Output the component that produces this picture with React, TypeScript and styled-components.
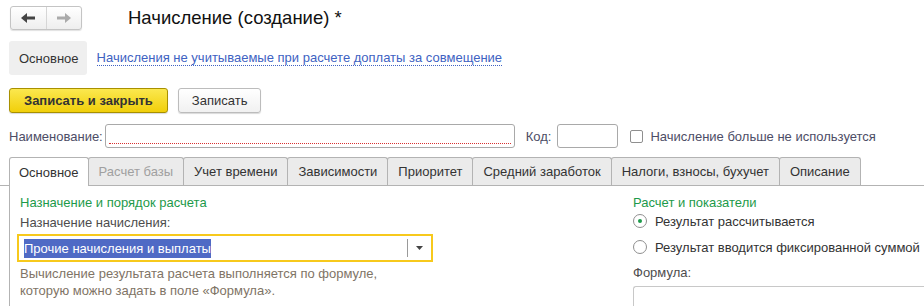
import React from 'react'
import styled, {createGlobalStyle} from 'styled-components'

const GlobalStyle = createGlobalStyle`
	html, body {
		margin: 0;
		padding: 0;
		background: #fff;
		font-family: Arial, "Liberation Sans", sans-serif;
		font-size: 13px;
		color: #333;
		overflow: hidden;
	}
`

const Page = styled.div`
	width: 924px;
	height: 306px;
	overflow: hidden;
`

const Header = styled.div`
	display: flex;
	align-items: center;
	padding: 6px 0 0 10px;
	height: 24px;
`

const NavGroup = styled.div`
	display: flex;
	width: 72px;
	height: 24px;
	box-sizing: border-box;
	border: 1px solid #c4c4c4;
	border-radius: 3px;
	background: linear-gradient(#ffffff, #eeeeee);
	box-shadow: 0 1px 1px rgba(0, 0, 0, 0.12);
`

const NavButton = styled.div<{divider?: boolean}>`
	flex: 1;
	display: flex;
	align-items: center;
	justify-content: center;
	border-left: ${props => props.divider ? '1px solid #d6d6d6' : 'none'};
`

const Title = styled.h1`
	margin: 0 0 0 46px;
	font-size: 18.5px;
	font-weight: normal;
	color: #111;
	line-height: 24px;
`

const SectionRow = styled.div`
	display: flex;
	align-items: center;
	margin: 11px 0 0 9px;
	height: 34px;
`

const SectionCurrent = styled.div`
	display: flex;
	align-items: center;
	height: 34px;
	padding: 0 8px 0 10px;
	background: #efefef;
	border-radius: 3px;
	color: #333;
`

const SectionLink = styled.a`
	margin-left: 10px;
	color: #4062c2;
	text-decoration: none;
	border-bottom: 1px dotted #4062c2;
	line-height: 14px;
`

const Toolbar = styled.div`
	display: flex;
	gap: 10px;
	margin: 13px 0 0 9px;
	height: 25px;
`

const Button = styled.button<{primary?: boolean}>`
	height: 25px;
	box-sizing: border-box;
	padding: 0 ${props => props.primary ? '14px' : '13px'};
	font-family: Arial, "Liberation Sans", sans-serif;
	font-size: 13px;
	font-weight: ${props => props.primary ? 'bold' : 'normal'};
	color: #333;
	border-radius: 3px;
	border: 1px solid ${props => props.primary ? '#a89000' : '#bcbcbc'};
	background: ${props => props.primary
		? 'linear-gradient(#fbe84f, #f1cf0a)'
		: 'linear-gradient(#ffffff, #f1f1f1)'};
	box-shadow: 0 1px 1px rgba(0, 0, 0, 0.15);
`

const FieldRow = styled.div`
	display: flex;
	align-items: center;
	margin: 11px 0 0 9px;
	height: 24px;
`

const Label = styled.span<{gap?: number, lead?: number}>`
	color: #4d4d66;
	margin-left: ${props => props.lead ?? 0}px;
	margin-right: ${props => props.gap ?? 0}px;
	white-space: nowrap;
`

const Input = styled.div<{width: number, required?: boolean}>`
	position: relative;
	width: ${props => props.width}px;
	height: 24px;
	box-sizing: border-box;
	border: 1px solid #a9a9a9;
	border-radius: 3px;
	background: #fff;

	&::after {
		content: '';
		display: ${props => props.required ? 'block' : 'none'};
		position: absolute;
		left: 3px;
		right: 3px;
		bottom: 3px;
		border-bottom: 1px dotted #d83030;
	}
`

const CheckBox = styled.span`
	display: inline-block;
	width: 13px;
	height: 13px;
	box-sizing: border-box;
	border: 1px solid #8f8f8f;
	border-radius: 2px;
	margin: 0 7px 0 12px;
	background: #fff;
`

const Tabs = styled.div`
	display: flex;
	margin-top: 9px;
	padding-left: 9px;
	height: 28px;
	border-bottom: 1px solid #b3b3b3;
`

const Tab = styled.div<{active?: boolean, disabled?: boolean}>`
	display: flex;
	align-items: center;
	box-sizing: border-box;
	height: ${props => props.active ? '29px' : '28px'};
	padding: 0 ${props => props.active ? '9px' : '10px'};
	margin-left: -1px;
	border: 1px solid #b3b3b3;
	border-bottom: none;
	border-radius: 3px 3px 0 0;
	background: ${props => props.active ? '#fff' : '#ebebeb'};
	color: ${props => props.disabled ? '#a0a0a0' : '#333'};
	position: relative;
	z-index: ${props => props.active ? 1 : 0};
	white-space: nowrap;
	&:first-child {
		margin-left: 0;
	}
`

const Panel = styled.div`
	display: flex;
	margin-left: 9px;
	border-left: 1px solid #b3b3b3;
	height: 120px;
`

const LeftColumn = styled.div`
	width: 416px;
	padding-left: 7px;
`

const RightColumn = styled.div`
	margin-left: 200px;
	flex: 1;
`

const GroupTitle = styled.div<{indent?: number}>`
	color: #1d9a4a;
	height: 16px;
	line-height: 16px;
	margin-top: 9px;
	padding-left: ${props => props.indent ?? 0}px;
`

const FieldCaption = styled.div<{top: number, indent?: number}>`
	color: #4d4d4d;
	line-height: 16px;
	margin-top: ${props => props.top}px;
	padding-left: ${props => props.indent ?? 0}px;
`

const Select = styled.div`
	display: flex;
	align-items: center;
	margin-top: 3px;
	height: 28px;
	box-sizing: border-box;
	border: 2px solid #f7c91c;
	background: #fff;
`

const SelectValue = styled.div`
	flex: 1;
	padding-left: 5px;
`

const Selected = styled.span`
	background: #4f6ac5;
	color: #fff;
	padding: 2px 0;
`

const SelectButton = styled.div`
	display: flex;
	align-items: center;
	justify-content: center;
	width: 23px;
	height: 18px;
	border-left: 1px solid #9a9a9a;
`

const Hint = styled.div`
	color: #7f7466;
	line-height: 17px;
	margin-top: 3px;
	padding-left: 3px;
`

const RadioRow = styled.div<{top: number}>`
	display: flex;
	align-items: center;
	height: 16px;
	margin-top: ${props => props.top}px;
	color: #333;
`

const Radio = styled.span<{checked?: boolean}>`
	display: inline-flex;
	align-items: center;
	justify-content: center;
	width: 14px;
	height: 14px;
	box-sizing: border-box;
	border: 1px solid #8f8f8f;
	border-radius: 50%;
	margin-right: 8px;
	background: #fff;

	&::after {
		content: '';
		display: ${props => props.checked ? 'block' : 'none'};
		width: 4px;
		height: 4px;
		border-radius: 50%;
		background: #1d9a4a;
	}
`

const Formula = styled.div`
	margin-top: 5px;
	height: 40px;
	border: 1px solid #c8c8c8;
	border-right: none;
	border-radius: 3px 0 0 0;
`

const Arrow = ({dir, color}: {dir: 'left' | 'right', color: string}) => (
	<svg width="14" height="10" viewBox="0 0 14 10">
		<g transform={dir === 'right' ? 'translate(14 0) scale(-1 1)' : undefined} fill={color}>
			<polygon points="0,5 6,0 6,10"/>
			<rect x="5" y="3.5" width="9" height="3"/>
		</g>
	</svg>
)

const tabs = [
	{name: 'Основное', active: true},
	{name: 'Расчет базы', disabled: true},
	{name: 'Учет времени'},
	{name: 'Зависимости'},
	{name: 'Приоритет'},
	{name: 'Средний заработок'},
	{name: 'Налоги, взносы, бухучет'},
	{name: 'Описание'},
]

const App = () => {
	return (
		<Page>
			<GlobalStyle/>
			<Header>
				<NavGroup>
					<NavButton><Arrow dir="left" color="#444"/></NavButton>
					<NavButton divider><Arrow dir="right" color="#aaa"/></NavButton>
				</NavGroup>
				<Title>Начисление (создание) *</Title>
			</Header>

			<SectionRow>
				<SectionCurrent>Основное</SectionCurrent>
				<SectionLink href="#">Начисления не учитываемые при расчете доплаты за совмещение</SectionLink>
			</SectionRow>

			<Toolbar>
				<Button primary>Записать и закрыть</Button>
				<Button>Записать</Button>
			</Toolbar>

			<FieldRow>
				<Label gap={2}>Наименование:</Label>
				<Input width={410} required/>
				<Label gap={6} lead={11}>Код:</Label>
				<Input width={61}/>
				<CheckBox/>
				<Label>Начисление больше не используется</Label>
			</FieldRow>

			<Tabs>
				{tabs.map(tab => (
					<Tab key={tab.name} active={tab.active} disabled={tab.disabled}>{tab.name}</Tab>
				))}
			</Tabs>

			<Panel>
				<LeftColumn>
					<GroupTitle indent={3}>Назначение и порядок расчета</GroupTitle>
					<FieldCaption top={4} indent={3}>Назначение начисления:</FieldCaption>
					<Select>
						<SelectValue><Selected>Прочие начисления и выплаты</Selected></SelectValue>
						<SelectButton>
							<svg width="7" height="4" viewBox="0 0 7 4"><polygon points="0,0 7,0 3.5,4" fill="#444"/></svg>
						</SelectButton>
					</Select>
					<Hint>
						Вычисление результата расчета выполняется по формуле,<br/>
						которую можно задать в поле «Формула».
					</Hint>
				</LeftColumn>
				<RightColumn>
					<GroupTitle>Расчет и показатели</GroupTitle>
					<RadioRow top={2}><Radio checked/>Результат рассчитывается</RadioRow>
					<RadioRow top={10}><Radio/>Результат вводится фиксированной суммой</RadioRow>
					<FieldCaption top={10}>Формула:</FieldCaption>
					<Formula/>
				</RightColumn>
			</Panel>
		</Page>
	)
}

export default App
